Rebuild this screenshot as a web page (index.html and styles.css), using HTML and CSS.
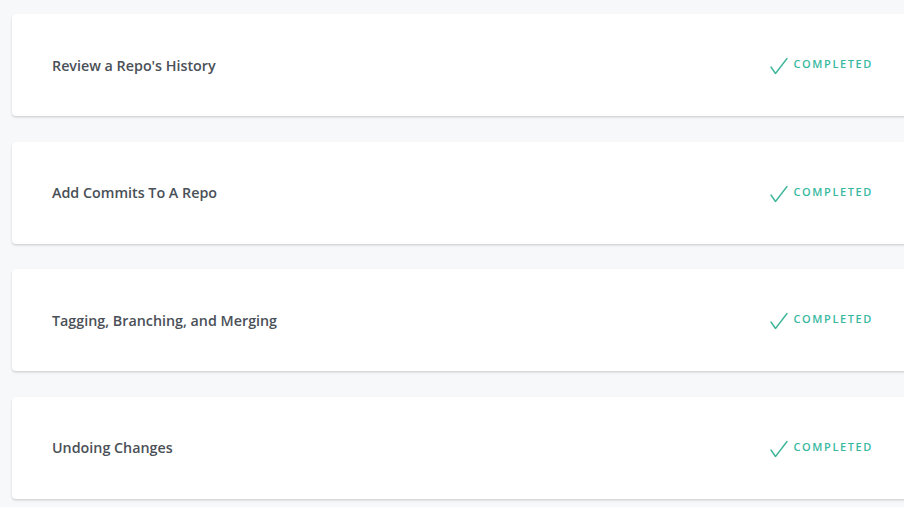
FILE: index.html
```html
<!DOCTYPE html>
<html>
<head>
<meta charset="utf-8">
<link rel="stylesheet" href="styles.css">
</head>
<body>
<main class="list">
  <div class="card">
    <span class="title">Review a Repo's History</span>
    <span class="status"><svg class="check" viewBox="0 0 18 18" width="18" height="18"><path d="M1 10 L5.5 16.5 L17 1.5" fill="none" stroke="currentColor" stroke-width="1.4" stroke-linecap="round" stroke-linejoin="round"/></svg>COMPLETED</span>
  </div>
  <div class="card">
    <span class="title">Add Commits To A Repo</span>
    <span class="status"><svg class="check" viewBox="0 0 18 18" width="18" height="18"><path d="M1 10 L5.5 16.5 L17 1.5" fill="none" stroke="currentColor" stroke-width="1.4" stroke-linecap="round" stroke-linejoin="round"/></svg>COMPLETED</span>
  </div>
  <div class="card">
    <span class="title">Tagging, Branching, and Merging</span>
    <span class="status"><svg class="check" viewBox="0 0 18 18" width="18" height="18"><path d="M1 10 L5.5 16.5 L17 1.5" fill="none" stroke="currentColor" stroke-width="1.4" stroke-linecap="round" stroke-linejoin="round"/></svg>COMPLETED</span>
  </div>
  <div class="card">
    <span class="title">Undoing Changes</span>
    <span class="status"><svg class="check" viewBox="0 0 18 18" width="18" height="18"><path d="M1 10 L5.5 16.5 L17 1.5" fill="none" stroke="currentColor" stroke-width="1.4" stroke-linecap="round" stroke-linejoin="round"/></svg>COMPLETED</span>
  </div>
</main>
</body>
</html>
```

FILE: styles.css
```css
html, body {
  margin: 0;
  padding: 0;
}
body {
  background: #f7f8fa;
  font-family: "Open Sans", "Noto Sans", sans-serif;
  overflow: hidden;
  width: 904px;
  height: 507px;
}
.list {
  display: flex;
  flex-direction: column;
  gap: 25.67px;
  padding: 14px 0 0 12px;
  width: 920px;
}
.card {
  box-sizing: border-box;
  height: 102px;
  background: #fff;
  border-radius: 4px;
  box-shadow: 0 1px 2px rgba(0, 0, 0, 0.12), 0 2px 3px rgba(0, 0, 0, 0.06);
  display: flex;
  align-items: center;
  justify-content: space-between;
  padding: 0 59px 0 40px;
}
.title {
  font-size: 14.3px;
  font-weight: 600;
  color: #4a5058;
}
.status {
  display: flex;
  align-items: center;
  gap: 6px;
  font-size: 11px;
  font-weight: 600;
  letter-spacing: 1.6px;
  color: #38b99f;
  margin-top: -3px;
}
.check {
  color: #3db59a;
  margin-top: 5px;
}
```
